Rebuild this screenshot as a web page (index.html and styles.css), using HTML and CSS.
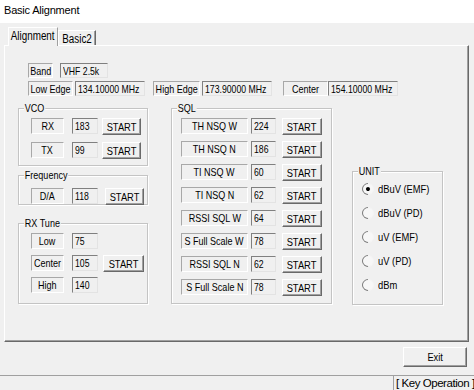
FILE: index.html
```html
<!DOCTYPE html>
<html>
<head>
<meta charset="utf-8">
<link rel="stylesheet" href="styles.css">
</head>
<body>
<div class="window">
  <div class="titlebar">Basic Alignment</div>
  <div class="content">
    <div class="tabs">
      <div class="tab tab-active"><span class="t">Alignment</span></div>
      <div class="tab tab-basic2"><span class="t">Basic2</span></div>
    </div>
    <div class="panel">
      <div class="info">
        <div class="info-row">
          <span class="lbl w-band"><span class="t">Band</span></span><span class="fld w-vhf"><span class="t">VHF 2.5k</span></span>
        </div>
        <div class="info-row">
          <span class="lbl w-low"><span class="t">Low Edge</span></span><span class="fld w-freq ml2"><span class="t">134.10000 MHz</span></span>
          <span class="lbl w-high"><span class="t">High Edge</span></span><span class="fld w-freq ml2"><span class="t">173.90000 MHz</span></span>
          <span class="lbl w-center"><span class="t">Center</span></span><span class="fld w-freq"><span class="t">154.10000 MHz</span></span>
        </div>
      </div>
      <div class="columns">
        <div class="left-col">
          <div class="group vco">
            <div class="legend">VCO</div>
            <div class="rows">
              <div class="row"><span class="lbl lw"><span class="t">RX</span></span><span class="fld fw"><span class="t">183</span></span><button class="btn bw"><span class="t">START</span></button></div>
              <div class="row"><span class="lbl lw"><span class="t">TX</span></span><span class="fld fw"><span class="t">99</span></span><button class="btn bw"><span class="t">START</span></button></div>
            </div>
          </div>
          <div class="group freq">
            <div class="legend">Frequency</div>
            <div class="rows">
              <div class="row"><span class="lbl lw"><span class="t">D/A</span></span><span class="fld fw"><span class="t">118</span></span><button class="btn bw"><span class="t">START</span></button></div>
            </div>
          </div>
          <div class="group rxtune">
            <div class="legend">RX Tune</div>
            <div class="rows">
              <div class="row"><span class="lbl lw"><span class="t">Low</span></span><span class="fld fw"><span class="t">75</span></span></div>
              <div class="row"><span class="lbl lw"><span class="t">Center</span></span><span class="fld fw"><span class="t">105</span></span><button class="btn bw"><span class="t">START</span></button></div>
              <div class="row"><span class="lbl lw"><span class="t">High</span></span><span class="fld fw"><span class="t">140</span></span></div>
            </div>
          </div>
        </div>
        <div class="group sql">
          <div class="legend">SQL</div>
          <div class="rows">
            <div class="row"><span class="lbl sl"><span class="t">TH NSQ W</span></span><span class="fld sf"><span class="t">224</span></span><button class="btn sb"><span class="t">START</span></button></div>
            <div class="row"><span class="lbl sl"><span class="t">TH NSQ N</span></span><span class="fld sf"><span class="t">186</span></span><button class="btn sb"><span class="t">START</span></button></div>
            <div class="row"><span class="lbl sl"><span class="t">TI NSQ W</span></span><span class="fld sf"><span class="t">60</span></span><button class="btn sb"><span class="t">START</span></button></div>
            <div class="row"><span class="lbl sl"><span class="t">TI NSQ N</span></span><span class="fld sf"><span class="t">62</span></span><button class="btn sb"><span class="t">START</span></button></div>
            <div class="row"><span class="lbl sl"><span class="t">RSSI SQL W</span></span><span class="fld sf"><span class="t">64</span></span><button class="btn sb"><span class="t">START</span></button></div>
            <div class="row"><span class="lbl sl"><span class="t">S Full Scale W</span></span><span class="fld sf"><span class="t">78</span></span><button class="btn sb"><span class="t">START</span></button></div>
            <div class="row"><span class="lbl sl"><span class="t">RSSI SQL N</span></span><span class="fld sf"><span class="t">62</span></span><button class="btn sb"><span class="t">START</span></button></div>
            <div class="row"><span class="lbl sl"><span class="t">S Full Scale N</span></span><span class="fld sf"><span class="t">78</span></span><button class="btn sb"><span class="t">START</span></button></div>
          </div>
        </div>
        <div class="group unit">
          <div class="legend">UNIT</div>
          <div class="rows">
            <div class="radio-row"><span class="radio checked"></span><span class="radio-text">dBuV (EMF)</span></div>
            <div class="radio-row"><span class="radio"></span><span class="radio-text">dBuV (PD)</span></div>
            <div class="radio-row"><span class="radio"></span><span class="radio-text">uV (EMF)</span></div>
            <div class="radio-row"><span class="radio"></span><span class="radio-text">uV (PD)</span></div>
            <div class="radio-row"><span class="radio"></span><span class="radio-text">dBm</span></div>
          </div>
        </div>
      </div>
    </div>
    <div class="footer">
      <button class="btn exit"><span class="t">Exit</span></button>
    </div>
  </div>
  <div class="statusbar">
    <div class="status-cell">[ Key Operation ]</div>
  </div>
</div>
</body>
</html>
```

FILE: styles.css
```css
* {
  box-sizing: border-box;
}

html, body {
  margin: 0;
  padding: 0;
}

body {
  width: 474px;
  height: 390px;
  overflow: hidden;
  background: #f0f0f0;
  font-family: "Liberation Sans", Arial, sans-serif;
  font-size: 11px;
  color: #000;
}

.window {
  display: flex;
  flex-direction: column;
  height: 390px;
}

/* condensed text (narrow Windows dialog font) */
.t {
  display: inline-block;
  flex-shrink: 0;
  white-space: nowrap;
  transform: scaleX(0.82);
  transform-origin: center center;
}

.titlebar {
  height: 23px;
  background: #fff;
  padding: 4px 0 0 4px;
  font-size: 11px;
  line-height: 13px;
  letter-spacing: -0.2px;
}

.content {
  height: 352px;
  padding: 4px 6px 0 4px;
  display: flex;
  flex-direction: column;
}

/* tabs */
.tabs {
  display: flex;
  align-items: flex-end;
  height: 18px;
  padding-left: 4px;
  position: relative;
  z-index: 1;
}

.tab {
  height: 15px;
  display: flex;
  justify-content: center;
  align-items: center;
  border: 1px solid;
  border-bottom: none;
  border-color: #fff #696969 transparent #fff;
  box-shadow: inset -1px 0 0 #a0a0a0;
  font-size: 12px;
  background: #f0f0f0;
}

.tab-active {
  width: 50px;
  height: 19px;
  margin-bottom: -1px;
  padding-bottom: 3px;
  border-right-color: #a0a0a0;
  box-shadow: none;
}

.tab-basic2 {
  width: 38px;
  padding-top: 1px;
}

/* main panel */
.panel {
  width: 465px;
  height: 297px;
  border: 1px solid;
  border-color: #fff #696969 #696969 #fff;
  box-shadow: inset -1px -1px 0 #a0a0a0;
}

.info {
  margin: 17px 0 0 23px;
  display: flex;
  flex-direction: column;
  gap: 3px;
}

.info-row {
  display: flex;
  height: 15px;
}

.lbl {
  display: flex;
  justify-content: center;
  align-items: center;
  height: 15px;
  border: 1px solid;
  border-color: #a8a8a8 #fff #fff #a8a8a8;
  overflow: hidden;
}

.fld {
  display: flex;
  align-items: center;
  height: 15px;
  border: 1px solid;
  border-color: #808080 #e3e3e3 #e3e3e3 #808080;
  padding-left: 2px;
  overflow: hidden;
}

.fld .t {
  transform: scaleX(0.79);
  transform-origin: left center;
}

.w-band { width: 25px; }
.w-vhf { width: 48px; margin-left: 7px; }
.w-low { width: 45px; }
.w-freq { width: 70px; }
.ml2 { margin-left: 2px; }
.w-high { width: 47px; margin-left: 8px; }
.w-center { width: 45px; margin-left: 11px; }

/* group columns */
.columns {
  display: flex;
  align-items: flex-start;
  margin: 12px 0 0 13px;
}

.left-col {
  width: 130px;
  display: flex;
  flex-direction: column;
}

.group {
  border: 1px solid #c4c4c4;
  box-shadow: inset 1px 1px 0 #fff, 1px 1px 0 #fff;
}

.legend {
  width: fit-content;
  height: 12px;
  line-height: 12px;
  margin: -7px 0 -5px 5px;
  padding: 0 1px;
  background: #f0f0f0;
  position: relative;
  white-space: nowrap;
  transform: scaleX(0.82);
  transform-origin: left center;
}

.rows {
  display: flex;
  flex-direction: column;
}

.row {
  display: flex;
  align-items: flex-start;
  height: 16px;
}

.row .lbl,
.row .fld {
  height: 16px;
}

.btn {
  font: inherit;
  color: #000;
  margin: 0;
  padding: 0;
  height: 17px;
  display: flex;
  justify-content: center;
  align-items: center;
  background: #f0f0f0;
  border: 1px solid;
  border-color: #fff #696969 #696969 #fff;
  box-shadow: inset -1px -1px 0 #a0a0a0;
}

.btn .t {
  transform: scaleX(0.85);
}

.vco {
  height: 58px;
}

.vco .rows {
  padding: 9px 0 0 12px;
  gap: 8px;
}

.freq {
  height: 30px;
  margin-top: 9px;
}

.freq .rows {
  padding: 12px 0 0 12px;
}

.rxtune {
  height: 81px;
  margin-top: 18px;
}

.rxtune .rows {
  padding: 9px 0 0 12px;
  gap: 7px;
}

.rxtune .row {
  height: 15px;
}

.lw { width: 33px; }
.fw { width: 26px; margin-left: 8px; }
.bw { width: 39px; margin-left: 4px; }
.freq .bw { margin-left: 7px; }
.rxtune .bw { width: 41px; margin-left: 5px; }

.sql {
  width: 161px;
  height: 196px;
  margin-left: 23px;
}

.sql .rows {
  padding: 9px 0 0 9px;
  gap: 7px;
}

.sl { width: 67px; }
.sf { width: 25px; margin-left: 3px; }
.sb { width: 40px; margin-left: 6px; }

.unit {
  width: 91px;
  height: 134px;
  margin-left: 20px;
  margin-top: 63px;
}

.unit .rows {
  padding: 10px 0 0 9px;
  gap: 10px;
}

.radio-row {
  display: flex;
  align-items: center;
  height: 14px;
}

.radio {
  width: 12px;
  height: 12px;
  flex-shrink: 0;
  border-radius: 50%;
  border: 1px solid;
  border-color: #7a7a7a #f4f4f4 #f4f4f4 #7a7a7a;
  background: #f7f7f7;
  transform: rotate(-45deg);
  display: flex;
  align-items: center;
  justify-content: center;
}

.radio.checked::after {
  content: "";
  width: 4px;
  height: 4px;
  border-radius: 50%;
  background: #000;
}

.radio-text {
  margin-left: 4px;
  white-space: nowrap;
  transform: scaleX(0.85);
  transform-origin: left center;
}

/* footer */
.footer {
  display: flex;
  justify-content: flex-end;
  margin-top: 5px;
  padding-right: 1px;
}

.exit {
  width: 64px;
  height: 20px;
}

/* status bar */
.statusbar {
  height: 15px;
  display: flex;
  justify-content: flex-end;
  border-top: 1px solid #a0a0a0;
}

.status-cell {
  width: 81px;
  border-left: 1px solid #a0a0a0;
  padding-left: 2px;
  font-size: 11.5px;
  line-height: 14px;
  letter-spacing: -0.45px;
  white-space: nowrap;
  overflow: hidden;
}
```
